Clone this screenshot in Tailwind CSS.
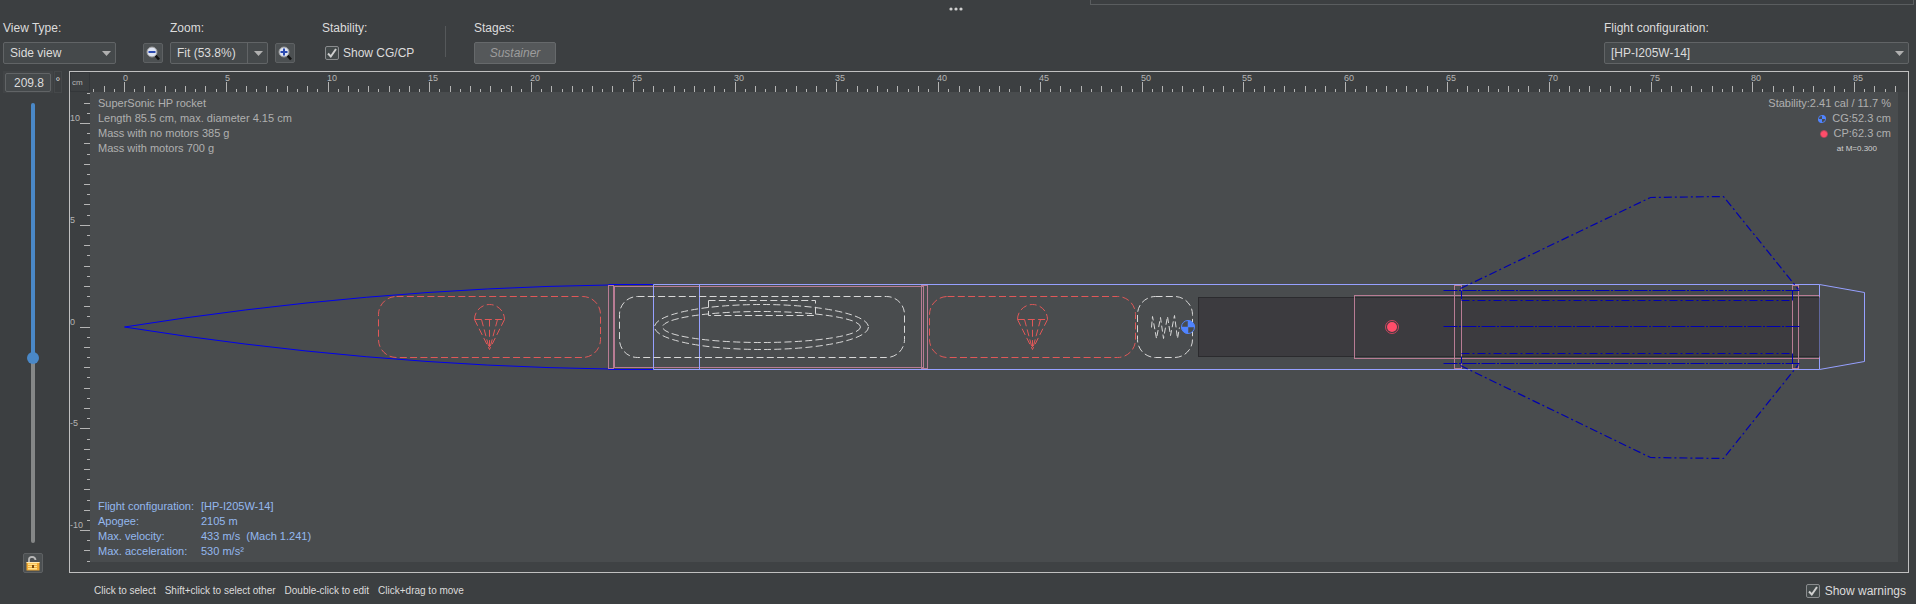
<!DOCTYPE html>
<html lang="en">
<head>
<meta charset="utf-8">
<title>Rocket side view</title>
<script src="https://cdn.jsdelivr.net/npm/@tailwindcss/browser@4"></script>
</head>
<body class="flex min-h-screen flex-col bg-[#3c3f41] font-['Liberation_Sans',Arial,sans-serif] text-xs leading-4 text-[#dcdcdc]">

<!-- Split-pane divider with the bottom edge of the panel above -->
<div class="relative grid h-5 w-full shrink-0 grid-cols-[1090fr_826fr]">
  <div></div>
  <div class="mr-[2px] h-[5px] border-b border-l border-r border-[#5a5d5f]"></div>
  <svg class="absolute left-1/2 top-[7px] -ml-[11px] h-1 w-4" viewBox="0 0 16 4" fill="#d0d0d0"><circle cx="4" cy="2" r="1.6"/><circle cx="9" cy="2" r="1.6"/><circle cx="14" cy="2" r="1.6"/></svg>
</div>

<header class="flex items-start pr-[7px]">
  <div class="ml-[3px] flex w-[113px] flex-col gap-[6px]">
    <label for="view">View Type:</label>
    <div class="relative">
      <select id="view" class="block h-[22px] w-full appearance-none rounded-xs border border-[#616466] bg-[#45494b] pl-[6px]"><option>Side view</option></select>
      <svg class="pointer-events-none absolute right-[5px] top-[9px] h-[5px] w-[9px]" viewBox="0 0 9 5"><path d="M0 0H9L4.500 5Z" fill="#b0b0b0"/></svg>
    </div>
  </div>
  <button aria-label="Zoom out" class="ml-[27px] mt-[23px] flex size-5 items-center justify-center rounded-xs border border-[#5e6163] bg-[#4c5052]">
    <svg class="size-4" viewBox="0 0 16 16"><path d="M10 10L14 14.500" stroke="#141414" stroke-width="2.600"/><circle cx="7" cy="7" r="5" fill="#dde3f0" stroke="#9a9a9a" stroke-width="1"/><path d="M3.500 7H10.500" stroke="#2a49b0" stroke-width="2"/></svg>
  </button>
  <div class="ml-[7px] flex w-[98px] flex-col gap-[6px]">
    <label for="zoom">Zoom:</label>
    <div class="relative">
      <select id="zoom" class="block h-[22px] w-full appearance-none rounded-xs border border-[#616466] bg-[#45494b] pl-[6px]"><option>Fit (53.8%)</option></select>
      <div class="pointer-events-none absolute bottom-0 right-0 top-0 flex w-[21px] items-center justify-center border-l border-[#616466]">
        <svg class="h-[5px] w-[9px]" viewBox="0 0 9 5"><path d="M0 0H9L4.500 5Z" fill="#b0b0b0"/></svg>
      </div>
    </div>
  </div>
  <button aria-label="Zoom in" class="ml-[7px] mt-[23px] flex size-5 items-center justify-center rounded-xs border border-[#5e6163] bg-[#4c5052]">
    <svg class="size-4" viewBox="0 0 16 16"><path d="M10 10L14 14.500" stroke="#141414" stroke-width="2.600"/><circle cx="7" cy="7" r="5" fill="#dde3f0" stroke="#9a9a9a" stroke-width="1"/><path d="M3.500 7H10.500M7 3.500V10.500" stroke="#2a49b0" stroke-width="2"/></svg>
  </button>
  <div class="ml-[27px] flex w-[123px] flex-col gap-[6px]">
    <span>Stability:</span>
    <label class="flex h-[22px] items-center gap-1 pl-[3px]">
      <span class="grid">
        <input type="checkbox" checked class="peer col-start-1 row-start-1 size-[14px] appearance-none rounded-xs border border-[#8a8c8e] bg-[#43494a]">
        <svg class="pointer-events-none invisible col-start-1 row-start-1 size-[14px] peer-checked:visible" viewBox="0 0 14 14" fill="none" stroke="#d0d0d0" stroke-width="2"><path d="M3 7.500L5.800 10.500L11 3"/></svg>
      </span>
      Show CG/CP
    </label>
  </div>
  <div class="mt-[6px] h-[31px] w-px bg-[#55585a]"></div>
  <div class="ml-[28px] flex w-[82px] flex-col gap-[6px]">
    <span>Stages:</span>
    <button disabled class="h-[22px] rounded-xs border border-[#66696b] bg-[#55585a] italic text-[#9d9d9d]">Sustainer</button>
  </div>
  <div class="ml-auto flex w-[305px] flex-col gap-[6px]">
    <label for="config">Flight configuration:</label>
    <div class="relative">
      <select id="config" class="block h-[22px] w-full appearance-none rounded-xs border border-[#616466] bg-[#45494b] pl-[6px]"><option>[HP-I205W-14]</option></select>
      <svg class="pointer-events-none absolute right-[5px] top-[9px] h-[5px] w-[9px]" viewBox="0 0 9 5"><path d="M0 0H9L4.500 5Z" fill="#b0b0b0"/></svg>
    </div>
  </div>
</header>

<main class="mt-[7px] flex pr-[7px]">
  <!-- Rotation controls -->
  <div class="flex w-[69px] shrink-0 flex-col">
    <div class="flex gap-px pl-[3px]">
      <div class="h-[22px] w-[50px] bg-[#414446] px-[2px] pt-[2px]">
        <input aria-label="Rotation" value="209.8" class="block h-[19px] w-full rounded-xs border border-[#616466] bg-[#45494b] pr-[6px] text-right">
      </div>
      <div class="h-[22px] w-2 border border-[#45484a] pt-[2px] text-center leading-4">°</div>
    </div>
    <div class="flex w-[66px] grow justify-center pt-[10px]">
      <input type="range" aria-label="Rotation angle" min="0" max="360" step="0.1" value="209.8" class="h-[440px] w-3 appearance-none bg-transparent [writing-mode:vertical-lr] [&::-webkit-slider-runnable-track]:w-1 [&::-webkit-slider-runnable-track]:rounded-full [&::-webkit-slider-runnable-track]:bg-[linear-gradient(to_bottom,#4a88c7_58%,#858787_58%)] [&::-webkit-slider-thumb]:-ml-1 [&::-webkit-slider-thumb]:size-3 [&::-webkit-slider-thumb]:appearance-none [&::-webkit-slider-thumb]:rounded-full [&::-webkit-slider-thumb]:bg-[#4a88c7]">
    </div>
    <button aria-label="Unlock rotation" class="ml-[23px] flex size-5 items-center justify-center rounded-xs border border-[#5e6163] bg-[#4c5052]">
      <svg class="size-4" viewBox="0 0 16 16"><path d="M4 7V4.500Q4 2 7 1.800Q10.500 2 10.500 5" fill="none" stroke="#b8b8b8" stroke-width="1.800"/><rect x="1.500" y="7" width="13" height="8.500" fill="#f0a830"/><path d="M1.500 7.500H14.500" stroke="#ffe9b0"/><rect x="3" y="8.500" width="9" height="6" fill="#ffe08a"/><path d="M3 10.500H12M3 12.500H12" stroke="#f0b040"/><rect x="7" y="10" width="2" height="3" fill="#7a4a10"/></svg>
    </button>
  </div>

  <!-- Drawing canvas -->
  <div class="grid min-w-0 flex-1 border border-[#c0c0c0]">
    <svg class="col-start-1 row-start-1 h-auto w-full" viewBox="70 72 1838 500" font-family="Liberation Sans, Arial, sans-serif">
      <rect x="90" y="92" width="1808" height="470" fill="#494c4e"/>
      <rect x="1898" y="92" width="10" height="480" fill="#3f4244"/>
      <rect x="90" y="562" width="1818" height="10" fill="#3f4244"/>
      <rect x="70.500" y="72.500" width="19" height="19" fill="none" stroke="#34373a"/>
      <text x="72" y="85" font-size="8" fill="#b4b4b4">cm</text>
      <path id="ticks" fill="none" stroke="#b4b4b4" shape-rendering="crispEdges"/>
      <g id="labels" font-size="9" fill="#b4b4b4"></g>

      <g fill="none" transform="translate(.5 .5)">
        <!-- nose cone -->
        <path d="M124 326.500Q366 288 608 284.500M124 326.500Q366 365 608 368.500" stroke="#0000ee"/>
        <path d="M608 284H653M608 369H653" stroke="#0000ee"/>
        <!-- motor -->
        <rect x="1198" y="297" width="621" height="59" fill="#3c3b3f" stroke="#2b2b2e"/>
        <!-- centring rings, coupler and motor mount -->
        <g stroke="#b87c94">
          <rect x="608" y="285" width="5" height="83"/>
          <rect x="614" y="286" width="309" height="81"/>
          <rect x="921" y="285" width="6" height="83"/>
          <rect x="1354" y="295" width="465" height="63"/>
          <rect x="1454" y="285" width="7" height="83"/>
          <rect x="1792" y="285" width="6" height="83"/>
        </g>
        <!-- body tubes and tail cone -->
        <g stroke="#96a0ff">
          <path d="M653 284H1819M653 369H1819M653 284V369M699 284V369M1819 284V296M1819 357V369"/>
          <path d="M1819 297V356" stroke="#60669c"/>
          <path d="M1819 284L1864 292V361L1819 369"/>
        </g>
        <!-- mass components -->
        <g stroke="#d8d8d8" stroke-dasharray="7 3.300">
          <rect x="619" y="296" width="285" height="61" rx="18"/>
          <ellipse cx="761" cy="326.500" rx="107" ry="22.500"/>
          <ellipse cx="761" cy="326.500" rx="99" ry="15.500"/>
          <rect x="708" y="300" width="107" height="15"/>
          <rect x="1137" y="296" width="55" height="61" rx="18"/>
          <path d="M1151 327L1152 316L1156 338L1160 317L1163 338L1167 316L1170 335L1174 315L1177 338L1179 327" stroke-dasharray="6 3"/>
        </g>
        <!-- parachutes -->
        <g stroke="#e05858" stroke-dasharray="7 3.300">
          <rect x="378" y="296" width="222" height="61" rx="18"/>
          <path d="M474 319A15 15 0 0 1 504 319M474 319H504M474 319L489 349M481 319L489 349M489 319V349M497 319L489 349M504 319L489 349"/>
          <rect x="929" y="296" width="206" height="61" rx="18"/>
          <path d="M1017 319A15 15 0 0 1 1047 319M1017 319H1047M1017 319L1032 349M1024 319L1032 349M1032 319V349M1040 319L1032 349M1047 319L1032 349"/>
        </g>
        <!-- fins -->
        <g stroke="#0000b0" stroke-dasharray="8 3 2 3">
          <path d="M1460 288L1650 197L1723 196L1798 289" stroke-width="1.200"/>
          <path d="M1460 365L1650 457L1723 458L1798 364" stroke-width="1.200"/>
          <path d="M1461 300H1792M1461 353H1792"/>
          <path d="M1443 290H1799M1443 326H1799M1443 363H1799" stroke-dasharray="14 1.500 2 1.500"/>
          <path d="M1461 290V299M1461 356V363M1792 290V300M1792 353V363" stroke-dasharray="none"/>
        </g>
        <!-- centre of gravity and centre of pressure -->
        <circle cx="1187.500" cy="326.500" r="6.500" fill="#494c4e" stroke="#5084ff"/>
        <path d="M1187.500 326.500V320A6.500 6.500 0 0 1 1194 326.500ZM1187.500 326.500V333A6.500 6.500 0 0 1 1181 326.500Z" fill="#5084ff" stroke="#5084ff" stroke-width=".5"/>
        <circle cx="1391.500" cy="326.500" r="6.500" stroke="#c8455e"/>
        <circle cx="1391.500" cy="326.500" r="5" fill="#ff4d6a"/>
      </g>
    </svg>

    <div class="pointer-events-none z-10 col-start-1 row-start-1 flex flex-col justify-between pb-[13px] pl-[28px] pr-[17px] pt-[24px] text-[11px] leading-[15px] text-[#b0b0b0]">
      <div class="flex justify-between">
        <div>
          <p>SuperSonic HP rocket</p>
          <p>Length 85.5 cm, max. diameter 4.15 cm</p>
          <p>Mass with no motors 385 g</p>
          <p>Mass with motors 700 g</p>
        </div>
        <div class="flex flex-col items-end">
          <p>Stability:2.41 cal / 11.7 %</p>
          <p class="flex items-center gap-[6px]"><svg class="size-2" viewBox="0 0 9 9"><circle cx="4.500" cy="4.500" r="4" fill="none" stroke="#5084ff"/><path d="M4.500 4.500V0A4.500 4.500 0 0 1 9 4.500ZM4.500 4.500V9A4.500 4.500 0 0 1 0 4.500Z" fill="#5084ff"/></svg>CG:52.3 cm</p>
          <p class="flex items-center gap-[6px]"><svg class="size-2" viewBox="0 0 9 9"><circle cx="4.500" cy="4.500" r="4" fill="none" stroke="#c8455e"/><circle cx="4.500" cy="4.500" r="3.500" fill="#ff4d6a"/></svg>CP:62.3 cm</p>
          <p class="mr-[14px] text-[8px] text-[#d0d0d0]">at M=0.300</p>
        </div>
      </div>
      <dl class="grid grid-cols-[103px_auto] justify-start text-[#94b8ee]">
        <dt>Flight configuration:</dt><dd>[HP-I205W-14]</dd>
        <dt>Apogee:</dt><dd>2105 m</dd>
        <dt>Max. velocity:</dt><dd>433 m/s&nbsp; (Mach 1.241)</dd>
        <dt>Max. acceleration:</dt><dd>530 m/s²</dd>
      </dl>
    </div>
  </div>
</main>

<footer class="flex items-center justify-between pl-[94px] pr-[10px] pt-[10px]">
  <div class="flex gap-[9px] text-[10px]">
    <span>Click to select</span><span>Shift+click to select other</span><span>Double-click to edit</span><span>Click+drag to move</span>
  </div>
  <label class="flex items-center gap-[5px]">
    <span class="grid">
      <input type="checkbox" checked class="peer col-start-1 row-start-1 size-[14px] appearance-none rounded-xs border border-[#8a8c8e] bg-[#43494a]">
      <svg class="pointer-events-none invisible col-start-1 row-start-1 size-[14px] peer-checked:visible" viewBox="0 0 14 14" fill="none" stroke="#d0d0d0" stroke-width="2"><path d="M3 7.500L5.800 10.500L11 3"/></svg>
    </span>
    Show warnings
  </label>
</footer>

<script>
  // Rulers: one tick per half centimetre, labels every five centimetres.
  const PX_PER_CM = 20.354, X0 = 124, Y0 = 326.6;
  const labels = document.getElementById('labels');
  let d = '';
  const addLabel = (x, y, value) => {
    const t = document.createElementNS('http://www.w3.org/2000/svg', 'text');
    t.setAttribute('x', x);
    t.setAttribute('y', y);
    t.textContent = value;
    labels.appendChild(t);
  };
  const tickLength = half => half % 10 === 0 ? 10 : half % 2 === 0 ? 6 : 3;
  for (let h = -3; h <= 174; h++) {
    const x = Math.round(X0 + h / 2 * PX_PER_CM);
    d += `M${x + 0.5} ${92 - tickLength(h)}V92`;
    if (h % 10 === 0) addLabel(x - 1, 81, h / 2);
  }
  for (let h = -23; h <= 23; h++) {
    const y = Math.round(Y0 - h / 2 * PX_PER_CM);
    d += `M${90 - tickLength(h)} ${y + 0.5}H90`;
    if (h % 10 === 0) addLabel(70, y - 2, h / 2);
  }
  document.getElementById('ticks').setAttribute('d', d);
</script>
</body>
</html>
